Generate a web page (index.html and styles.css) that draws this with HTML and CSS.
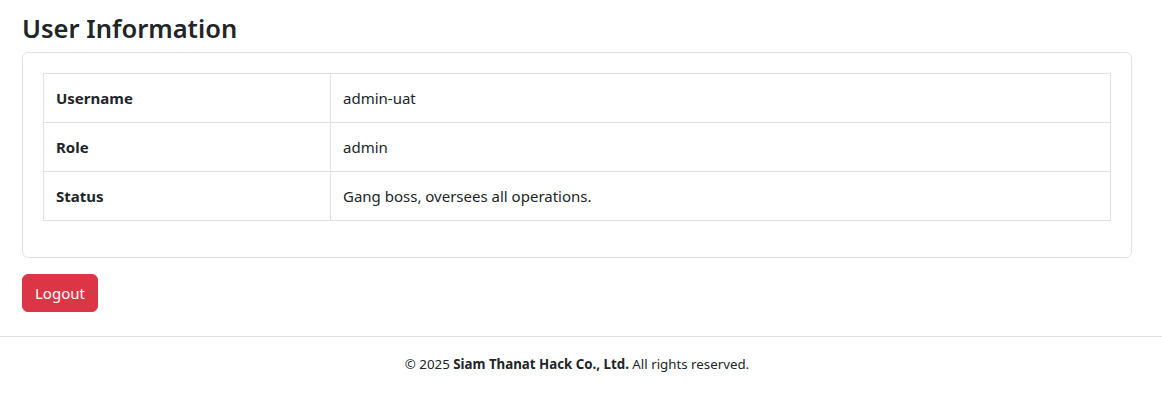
FILE: index.html
```html
<!DOCTYPE html>
<html>
<head>
    <title>User Information</title>
    <link rel="stylesheet" href="styles.css">
</head>
<body>
    <div class="container">
        <h3 class="page-title">User Information</h3>

        <!-- Dados do usuário -->
        <div class="card">
            <div class="card-body">
                <table class="info-table">
                    <tr>
                        <th>Username</th>
                        <td>admin-uat</td>
                    </tr>
                    <tr>
                        <th>Role</th>
                        <td>admin</td>
                    </tr>
                    <tr>
                        <th>Status</th>
                        <td>Gang boss, oversees all operations.</td>
                    </tr>
                </table>
            </div>
        </div>

        <form action="#" method="post">
            <button type="submit" class="btn-logout">Logout</button>
        </form>
    </div>

    <footer class="footer">
        <div class="footer-inner">
            &copy; 2025 <strong>Siam Thanat Hack Co., Ltd.</strong> All rights reserved.
        </div>
    </footer>
</body>
</html>
```

FILE: styles.css
```css
body {
    font-family: "Noto Sans", "Open Sans", sans-serif;
    font-size: 15px;
    line-height: 24px;
    margin: 0;
    padding: 0;
    background-color: #fff;
    color: #212529;
}

.container {
    width: 1110px;
    margin-left: 22px;
    padding-top: 12px;
}

.page-title {
    font-size: 25.5px;
    font-weight: 600;
    line-height: 32px;
    margin: 0 0 8px 0;
}

.card {
    border: 1px solid #dee2e6;
    border-radius: 6px;
}

.card-body {
    padding: 20px;
}

.info-table {
    width: 100%;
    border-collapse: collapse;
    margin-bottom: 16px;
}

.info-table th,
.info-table td {
    border: 1px solid #dee2e6;
    padding: 12px;
    line-height: 24px;
    text-align: left;
    vertical-align: top;
}

.info-table th {
    width: 262px;
    font-weight: bold;
}

form {
    margin: 16px 0 0 0;
}

.btn-logout {
    font-family: inherit;
    font-size: 15px;
    line-height: 24px;
    padding: 6px 12px;
    color: #fff;
    background-color: #dc3545;
    border: 1px solid #dc3545;
    border-radius: 6px;
    cursor: pointer;
}

.footer {
    margin-top: 24px;
    border-top: 1px solid #dee2e6;
    padding: 17px 0 15px 0;
}

.footer-inner {
    width: 1110px;
    margin-left: 22px;
    text-align: center;
    font-size: 13.3px;
    line-height: 21px;
}
```
